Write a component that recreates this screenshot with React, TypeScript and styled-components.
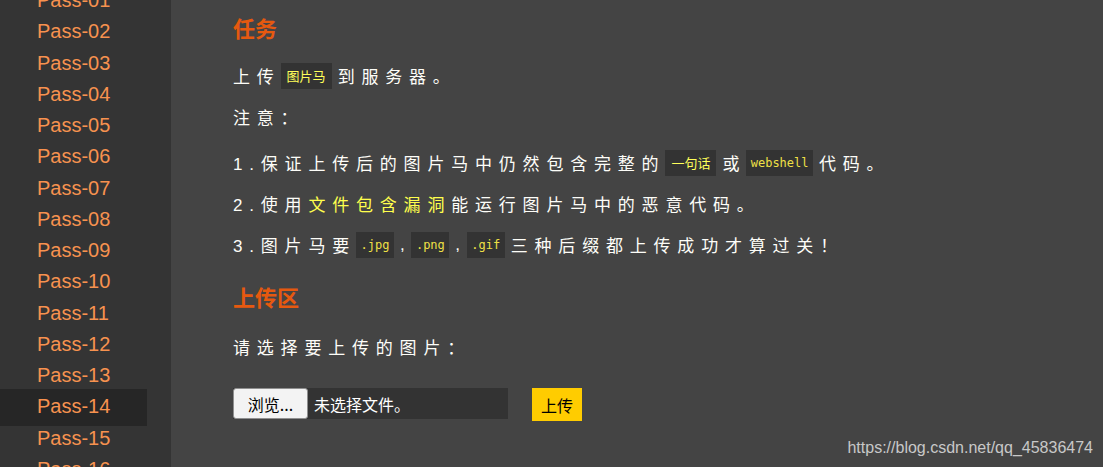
import React from "react";
import styled, { createGlobalStyle } from "styled-components";

const Global = createGlobalStyle`
  html, body { margin: 0; padding: 0; background: #444444; }
  body { font-family: "Liberation Sans", "Noto Sans CJK SC", sans-serif; }
`;

const Page = styled.div`
  display: flex;
  width: 1103px;
  height: 467px;
  overflow: hidden;
  position: relative;
  background: #444444;
`;

const Sidebar = styled.nav`
  width: 171px;
  flex: none;
  background: #343434;
  overflow: hidden;
`;

const PassList = styled.ul`
  list-style: none;
  margin: -15px 0 0;
  padding: 0;
  width: 147px;
`;

const PassItem = styled.li<{ $active?: boolean }>`
  height: 31.27px;
  line-height: 31.27px;
  padding-left: 37px;
  font-family: "Liberation Sans", Arial, sans-serif;
  font-size: 20px;
  color: #f7924f;
  background: ${(p) => (p.$active ? "#262626" : "transparent")};
  ${(p) => (p.$active ? "padding-top: 2.5px; padding-bottom: 3px; margin: -2.5px 0 -3px;" : "")}
`;

const Main = styled.main`
  flex: 1;
  padding: 12px 0 0 62px;
  display: flex;
  flex-direction: column;
  align-items: flex-start;
  color: #ffffff;
`;

const Heading = styled.h3<{ $top?: number }>`
  margin: ${(p) => p.$top ?? 0}px 0 0;
  height: 30px;
  line-height: 30px;
  font-family: "Noto Sans CJK SC", sans-serif;
  font-size: 22px;
  font-weight: 700;
  color: #e6590f;
`;

const Line = styled.p<{ $top?: number }>`
  margin: ${(p) => p.$top ?? 0}px 0 0;
  height: 41px;
  display: flex;
  align-items: center;
  font-family: "Liberation Sans", "Noto Sans CJK SC", sans-serif;
  font-size: 17px;
  letter-spacing: 6.8px;
  color: #fdfdf8;
  white-space: nowrap;
`;

const Code = styled.code<{ $mono?: boolean }>`
  display: inline-block;
  height: 26px;
  line-height: 26px;
  padding: 0 ${(p) => (p.$mono ? "4.5px" : "6px")};
  margin-right: 6px;
  background: #333333;
  letter-spacing: 0;
  font-family: ${(p) =>
    p.$mono ? '"DejaVu Sans Mono", "Liberation Mono", monospace' : '"Noto Sans CJK SC", sans-serif'};
  font-size: ${(p) => (p.$mono ? "12px" : "13px")};
  color: ${(p) => (p.$mono ? "#efe046" : "#ffff5a")};
`;

const Highlight = styled.span`
  color: #ffff4d;
`;

const UploadRow = styled.form`
  margin-top: 21px;
  display: flex;
  align-items: flex-start;
  gap: 24px;
`;

const FileBox = styled.div`
  width: 275px;
  height: 31px;
  display: flex;
  align-items: center;
  background: #333333;
  font-family: "Noto Sans CJK SC", sans-serif;
  font-size: 16px;
  color: #ffffff;
`;

const BrowseButton = styled.button`
  width: 75px;
  height: 31px;
  margin-right: 6px;
  box-sizing: border-box;
  border: 1px solid #8f8f8f;
  border-radius: 3px;
  background: #f3f3f3;
  color: #000000;
  font-family: "Noto Sans CJK SC", sans-serif;
  font-size: 16px;
  padding: 0;
`;

const SubmitButton = styled.button`
  width: 50px;
  height: 33px;
  border: none;
  background: #ffcc00;
  color: #000000;
  font-family: "Noto Sans CJK SC", sans-serif;
  font-size: 16px;
  padding: 0;
`;

const Watermark = styled.div`
  position: absolute;
  right: 10px;
  bottom: 10px;
  font-family: "Liberation Sans", Arial, sans-serif;
  font-size: 16px;
  color: #c8c8c8;
`;

const passes = Array.from({ length: 16 }, (_, i) => `Pass-${String(i + 1).padStart(2, "0")}`);

export default function App() {
  return (
    <Page>
      <Global />
      <Sidebar>
        <PassList>
          {passes.map((p) => (
            <PassItem key={p} $active={p === "Pass-14"}>
              {p}
            </PassItem>
          ))}
        </PassList>
      </Sidebar>
      <Main>
        <Heading>任务</Heading>
        <Line $top={13}>
          上传<Code>图片马</Code>到服务器。
        </Line>
        <Line>注意：</Line>
        <Line $top={5}>
          1.保证上传后的图片马中仍然包含完整的<Code>一句话</Code>或<Code $mono>webshell</Code>代码。
        </Line>
        <Line>
          2.使用<Highlight>文件包含漏洞</Highlight>能运行图片马中的恶意代码。
        </Line>
        <Line>
          3.图片马要<Code $mono>.jpg</Code>,<Code $mono>.png</Code>,<Code $mono>.gif</Code>三种后缀都上传成功才算过关！
        </Line>
        <Heading $top={16}>上传区</Heading>
        <Line $top={15}>请选择要上传的图片：</Line>
        <UploadRow onSubmit={(e) => e.preventDefault()}>
          <FileBox>
            <BrowseButton type="button">浏览...</BrowseButton>
            未选择文件。
          </FileBox>
          <SubmitButton type="submit">上传</SubmitButton>
        </UploadRow>
      </Main>
      <Watermark>https://blog.csdn.net/qq_45836474</Watermark>
    </Page>
  );
}
